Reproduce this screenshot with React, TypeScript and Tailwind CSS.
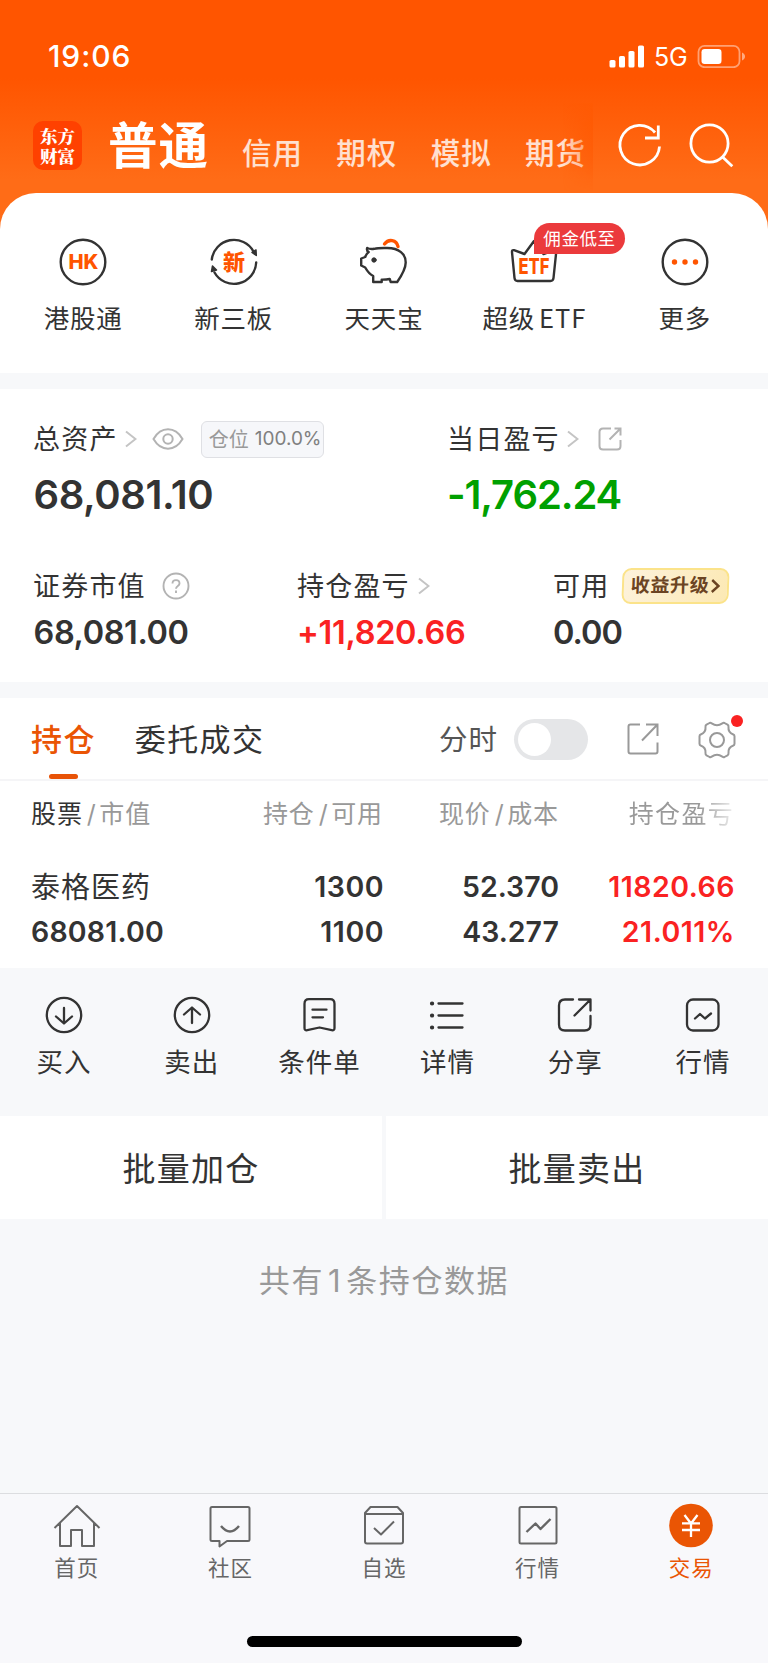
import React from "react";

type Kids = { children?: React.ReactNode };

const Chevron = ({ className = "" }: { className?: string }) => (
  <svg className={`h-[18px] w-[12px] shrink-0 ${className}`} viewBox="0 0 12 18" fill="none" stroke="#c4c4c4" strokeWidth="2">
    <path d="M1 1.5 10.5 9 1 16.5" />
  </svg>
);

const Slash = () => <span className="ml-[4px] mr-[2.500px]">/</span>;

const GridItem = ({ label, children }: Kids & { label: React.ReactNode }) => (
  <div className="flex flex-1 flex-col items-center">
    <svg className="h-12 w-12 overflow-visible" viewBox="0 0 48 48" fill="none" stroke="#333" strokeWidth="2.4" strokeLinejoin="round" strokeLinecap="round">
      {children}
    </svg>
    <div className="mt-[15px] whitespace-nowrap text-[25.5px] leading-9 tracking-[0.8px]">{label}</div>
  </div>
);

const Action = ({ label, children }: Kids & { label: string }) => (
  <div className="flex flex-1 flex-col items-center">
    <svg className="h-10 w-10" viewBox="0 0 40 40" fill="none" stroke="#333" strokeWidth="2.3" strokeLinejoin="round" strokeLinecap="round">
      {children}
    </svg>
    <div className="mt-[9px] text-[26.5px] leading-9 tracking-[1px]">{label}</div>
  </div>
);

const Tab = ({ label, active, children }: Kids & { label: string; active?: boolean }) => (
  <div className={`flex flex-1 flex-col items-center ${active ? "text-[#ea5504]" : "text-[#666]"}`}>
    <svg className="h-12 w-12" viewBox="0 0 48 48" fill="none" stroke="currentColor" strokeWidth="2" strokeLinejoin="round">
      {children}
    </svg>
    <div className="mt-[4px] text-[21.5px] leading-[30px] tracking-[1px]">{label}</div>
  </div>
);

export default function App() {
  return (
    <div className="flex h-[1663px] w-[768px] flex-col overflow-hidden bg-[#f7f8fa] font-['Inter','Noto_Sans_CJK_SC',sans-serif] text-[#333]">
      <header className="h-[240px] shrink-0 bg-[linear-gradient(180deg,#ff5500_0px,#ff5500_78px,#ff6c17_180px,#ff6c17_240px)] text-white">
        <div className="flex h-[112px] items-center pl-[48px]">
          <span className="text-[30px] font-medium leading-9 tracking-[0.9px]">19:06</span>
          <svg className="ml-auto h-6 w-[36px]" viewBox="0 0 36 24" fill="#fff">
            <rect x="0.5" y="16" width="6" height="7.5" rx="1.6" />
            <rect x="10" y="12" width="6" height="11.5" rx="1.6" />
            <rect x="19.5" y="7" width="6" height="16.5" rx="1.6" />
            <rect x="29" y="1.5" width="6" height="22" rx="1.6" />
          </svg>
          <span className="ml-[9px] mt-[2px] w-[42px] text-[25px] leading-8 -tracking-[0.3px]">5G</span>
          <svg className="mr-[21px] h-6 w-[51px]" viewBox="87 0 51 24" fill="#fff">
            <rect x="89.5" y="1.8" width="41" height="21.4" rx="6" fill="none" stroke="#fff" strokeOpacity=".45" strokeWidth="1.8" />
            <rect x="92.5" y="5" width="20" height="15" rx="3.2" />
            <path d="M133 8.500c4 1.500 4 6.500 0 8Z" fillOpacity=".5" />
          </svg>
        </div>
        <div className="flex h-[80px] pl-[33px]">
          <div className="mt-[9px] flex h-[49px] w-[49px] flex-col items-center justify-center gap-[2px] rounded-[10px] bg-[#ff4100] font-['Noto_Serif_CJK_SC','Noto_Sans_CJK_SC',serif] text-[17.5px] font-black leading-[18px]">
            <span>东方</span>
            <span>财富</span>
          </div>
          <div className="ml-[26px] mt-[4px] text-[49.5px] font-bold leading-[60px] tracking-[1px]">普通</div>
          <div className="relative -mt-[9px] ml-[33px] flex h-[89px] w-[351px] overflow-hidden pt-[30px] text-[29.5px] font-medium leading-10 tracking-[1px] text-white/80">
            <span className="mr-[33.300px] shrink-0">信用</span>
            <span className="mr-[33.300px] shrink-0">期权</span>
            <span className="mr-[33.300px] shrink-0">模拟</span>
            <span className="shrink-0">期货</span>
            <div className="absolute right-0 top-0 h-full w-[30px] bg-[linear-gradient(90deg,transparent,#ff5a04)] [mask-image:linear-gradient(180deg,#000,#0008_60%,transparent)]" />
          </div>
          <svg className="ml-[22px] mt-[7px] h-[52px] w-[125px]" viewBox="0 0 125 52" fill="none" stroke="#fff" strokeWidth="2.8">
            <path d="M44.500 27.500A19.800 19.800 0 1 1 40 13.500M43.300 6.500V19H30" />
            <circle cx="94.500" cy="24.500" r="18.600" />
            <path d="m107 37.500 10.300 9.800" />
          </svg>
        </div>
      </header>

      <section className="relative -mt-[47px] flex h-[180px] shrink-0 rounded-t-[36px] bg-white px-[8px] pt-[45px]">
        <GridItem label="港股通">
          <circle cx="24" cy="24" r="22.300" />
          <text x="24.500" y="31" textAnchor="middle" fontSize="20" fontWeight="800" fill="#ff5500" stroke="none" textLength="30" lengthAdjust="spacingAndGlyphs">HK</text>
        </GridItem>
        <GridItem label="新三板">
          <path d="M1.800 21.500A22.300 22.300 0 0 1 43.500 13.500M46.200 24.500A22.300 22.300 0 0 1 4.500 34.500" />
          <path d="m42 14.500 4-2.500.3 5.500ZM1.500 33.500l1-5.500 4 4Z" fill="#333" strokeWidth="1.500" />
          <text x="24" y="32" textAnchor="middle" fontSize="22" fontWeight="900" fill="#ff5500" stroke="none">新</text>
        </GridItem>
        <GridItem label="天天宝">
          <path transform="translate(-.8 0)" d="M8 10c2 1 4 1.300 7 .8 4-1 8-.8 13-.8 12 0 18.500 6 18.500 14.500 0 6-3 11.500-8.500 19.500h-6.500l-1-3c-4 .7-8 .6-8 .6V44h-8.500v-6c-4-2-6-5-8-8.500l-4-2v-7l4-1.500c.7-2 1.700-3.600 3.500-5C7.800 13 7.500 11.500 8 10Z" />
          <circle cx="14" cy="22" r="2.200" fill="#333" strokeWidth="1" />
          <path d="M24.500 6c4-5.500 12-4.500 13.500 2.500" stroke="#ff5500" strokeWidth="3.400" />
        </GridItem>
        <GridItem label={<>超级<span className="ml-[4px] font-['Noto_Sans_CJK_SC',sans-serif] leading-none tracking-[1px]">ETF</span></>}>
          <path d="M4 12.200 14.500 16 24 3l9.500 13L44 12.200q2.500-.6 2.200 2L43.500 40q-.3 3-3 3h-33q-2.700 0-3-3L2 14.200q-.2-2.600 2-2Z" />
          <text x="24" y="35.500" textAnchor="middle" fontSize="21" fontWeight="800" fill="#ff5500" stroke="none" textLength="31" lengthAdjust="spacingAndGlyphs">ETF</text>
        </GridItem>
        <GridItem label="更多">
          <circle cx="24" cy="24" r="22.300" />
          <g fill="#ff5500" stroke="none">
            <circle cx="13.500" cy="24" r="2.700" />
            <circle cx="24" cy="24" r="2.700" />
            <circle cx="34.500" cy="24" r="2.700" />
          </g>
        </GridItem>
        <div className="absolute left-[534px] top-[30px] flex h-[31px] w-[91px] items-center justify-center rounded-[16px] rounded-bl-none bg-[#eb3a3c] text-[17.5px] leading-none tracking-[0.6px] text-white">
          佣金低至
        </div>
      </section>

      <section className="mt-[16px] h-[293px] shrink-0 bg-white pl-[33px] pt-[30px]">
        <div className="flex">
          <div className="w-[414px]">
            <div className="flex h-10 items-center text-[27px] leading-10 tracking-[1.2px]">
              <span className="pt-px">总资产</span>
              <Chevron className="ml-[7px]" />
              <svg className="ml-[15px] h-[24px] w-[32px]" viewBox="0 0 32 24" fill="none" stroke="#b3b3b3" strokeWidth="2">
                <path d="M1.500 12C9-.9 23-.9 30.500 12 23 24.900 9 24.900 1.500 12Z" />
                <circle cx="16" cy="12" r="4.700" />
              </svg>
              <span className="ml-[17px] flex h-[37px] w-[123px] items-center justify-center gap-[6px] whitespace-nowrap rounded-[6px] border border-[#dfe0e4] bg-[#f6f7fa] pl-[6px] text-[#808080]">
                <span className="pt-px text-[20px] tracking-[0px] text-[#999]">仓位</span>
                <span className="text-[19px] tracking-[0px]">100.0%</span>
              </span>
            </div>
            <div className="mt-[12px] pl-[0.5px] text-[40px] font-semibold leading-[48px] -tracking-[0.4px]">68,081.10</div>
          </div>
          <div>
            <div className="flex h-10 items-center text-[27px] leading-10 tracking-[1.2px]">
              <span className="pt-px">当日盈亏</span>
              <Chevron className="ml-[7px]" />
              <svg className="ml-[18px] h-[26px] w-[26px]" viewBox="0 0 26 26" fill="none" stroke="#b3b3b3" strokeWidth="2">
                <path d="M14 2.500H6q-3.500 0-3.500 3.500v14q0 3.500 3.500 3.500h14q3.500 0 3.500-3.500v-6M17.500 2.500h6v7M23 3 12.500 13.500" />
              </svg>
            </div>
            <div className="mt-[12px] text-[40px] font-semibold leading-[48px] -tracking-[1.1px] text-[#00a000]">-1,762.24</div>
          </div>
        </div>
        <div className="mt-[47px] flex">
          <div className="w-[264px]">
            <div className="flex h-10 items-center text-[27px] leading-10 tracking-[1.2px]">
              <span className="pt-px">证券市值</span>
              <svg className="ml-[16px] h-[28px] w-[28px]" viewBox="0 0 28 28" fill="none" stroke="#b3b3b3" strokeWidth="1.900">
                <circle cx="14" cy="14" r="12.500" />
                <path d="M10.500 11.500c0-4.500 7-4.500 7 0 0 2.500-3.500 2.500-3.500 5.300M14 18.500v2.400" />
              </svg>
            </div>
            <div className="mt-[7px] pl-[0.5px] text-[32.5px] font-semibold leading-10 -tracking-[0.4px]">68,081.00</div>
          </div>
          <div className="w-[256px]">
            <div className="flex h-10 items-center text-[27px] leading-10 tracking-[1.2px]">
              <span className="pt-px">持仓盈亏</span>
              <Chevron className="ml-[8px]" />
            </div>
            <div className="mt-[7px] text-[32.5px] font-semibold leading-10 -tracking-[0.3px] text-[#fa2222]">+11,820.66</div>
          </div>
          <div>
            <div className="flex h-10 items-center text-[27px] leading-10 tracking-[1.2px]">
              <span className="pt-px">可用</span>
              <span className="ml-[13px] flex h-[36px] w-[107px] -skew-x-2 items-center justify-center gap-[2px] whitespace-nowrap rounded-[9px] border-2 border-[#fbe38a] bg-[linear-gradient(110deg,#fdf2dc,#fce9b4)] text-[19px] font-bold tracking-[0.6px] text-[#6b4423]">
                收益升级
                <svg className="h-4 w-[9px]" viewBox="0 0 9 16" fill="none" stroke="#6b4423" strokeWidth="2.400">
                  <path d="m1 2 6.500 6L1 14" />
                </svg>
              </span>
            </div>
            <div className="mt-[7px] text-[32.5px] font-semibold leading-10 -tracking-[1px]">0.00</div>
          </div>
        </div>
      </section>

      <section className="mt-[16px] h-[270px] shrink-0 bg-white">
        <div className="flex h-[83px] items-center border-b-2 border-[#f5f5f7] pl-[31px] pr-[31px]">
          <div className="flex h-full flex-col items-center text-[31px] font-medium tracking-[1.400px] text-[#ea5504]">
            <span className="mt-[22px] leading-10">持仓</span>
            <span className="mt-[14px] h-[6px] w-[29px] rounded-[2.500px] bg-[#e85307]" />
          </div>
          <span className="ml-[39px] pt-[3px] text-[31px] tracking-[1.400px]">委托成交</span>
          <span className="ml-auto mr-[16px] pt-[3px] text-[28.5px] tracking-[1px] text-[#555]">分时</span>
          <div className="mt-[2px] flex h-[41px] w-[74px] items-center rounded-full bg-[#e5e6e8] pl-[4px]">
            <span className="h-[33px] w-[33px] rounded-full bg-white" />
          </div>
          <svg className="ml-[38px] mt-px h-[34px] w-[34px]" viewBox="0 0 34 34" fill="none" stroke="#999" strokeWidth="2">
            <path d="M14 2.500H4.500q-2 0-2 2v25q0 2 2 2h25q2 0 2-2v-9M20 2.500h11.500V14M31 3 16 18.500" />
          </svg>
          <div className="relative ml-[37px] mt-[2px] h-[40px] w-[40px]">
            <svg className="h-[40px] w-[40px]" viewBox="0 0 40 40" fill="none" stroke="#999" strokeWidth="2" strokeLinejoin="round">
              <path d="M12.500 3q1.200-.5 2.200.4 5.300 3.800 10.600 0 1-.9 2.200-.4l3 1.700q1.200.8 1 2.200-.6 5.600 4.800 7.600 1.200.5 1.200 1.800v7.400q0 1.300-1.200 1.800-5.400 2-4.800 7.600.2 1.400-1 2.200l-3 1.700q-1.200.5-2.200-.4-5.300-3.800-10.600 0-1 .9-2.200.4l-3-1.700q-1.200-.8-1-2.200.6-5.600-4.800-7.600-1.200-.5-1.200-1.800v-7.400q0-1.300 1.200-1.800 5.400-2 4.800-7.600-.2-1.400 1-2.200Z" />
              <circle cx="20" cy="20" r="7" />
            </svg>
            <span className="absolute -top-[5px] left-[34px] h-[12px] w-[12px] rounded-full bg-[#fa2222]" />
          </div>
        </div>
        <div className="grid h-[66px] grid-cols-[199px_153px_176px_175px] items-center pl-[31px] pt-[2px] text-[25px] tracking-[0.9px] text-[#999]">
          <span><span className="text-[#333]">股票</span><Slash />市值</span>
          <span className="text-right">持仓<Slash />可用</span>
          <span className="text-right">现价<Slash />成本</span>
          <span className="bg-[linear-gradient(90deg,#999_80%,#eee)] bg-clip-text text-right tracking-[1.300px] text-transparent">持仓盈亏</span>
        </div>
        <div className="mt-[20px] grid grid-cols-[199px_154px_175px_176px] pl-[31px] text-[28.500px] font-semibold leading-10 tracking-[0.5px]">
          <span className="pt-px text-[29px] font-normal leading-[39px] tracking-[1px]">泰格医药</span>
          <span className="text-right">1300</span>
          <span className="text-right tracking-[0px]">52.370</span>
          <span className="text-right text-[#fa2222]">11820.66</span>
        </div>
        <div className="mt-[5px] grid grid-cols-[199px_154px_175px_176px] pl-[31px] text-[28.500px] font-semibold leading-10 tracking-[0.5px]">
          <span className="tracking-[0.2px]">68081.00</span>
          <span className="text-right">1100</span>
          <span className="text-right tracking-[0px]">43.277</span>
          <span className="text-right text-[#fa2222]">21.011%</span>
        </div>
      </section>

      <section className="flex h-[148px] shrink-0 pr-px pt-[27px]">
        <Action label="买入">
          <circle cx="20" cy="20" r="17.200" />
          <path d="M20 13v15M12 21.500l8 7 8-7" />
        </Action>
        <Action label="卖出">
          <circle cx="20" cy="20" r="17.200" />
          <path d="M20 28V13M12 19.500l8-7 8 7" />
        </Action>
        <Action label="条件单">
          <path d="M9 4.200h21q4.500 0 4.500 4.500V33q0 2.800-2.800 2.200L19.500 32.500 7.300 35.200Q4.500 35.800 4.500 33V8.700q0-4.500 4.500-4.500ZM12.500 14.700h14M12.500 22.300H23" />
        </Action>
        <Action label="详情">
          <path d="M11.500 8.500h24M11.500 20.500h24M11.500 32.500h24" />
          <path d="M5 8.500h.1M5 20.500h.1M5 32.500h.1" strokeWidth="4.200" />
        </Action>
        <Action label="分享">
          <path d="M18 4.500H10q-6 0-6 6v19q0 6 6 6h19.500q6 0 6-6v-8.500M24 4.500h11.500v11M35 5 19.500 20.500" />
        </Action>
        <Action label="行情">
          <rect x="4" y="4.500" width="31.500" height="31" rx="6" />
          <path d="m12 23.500 5-4.500 5 4.500 6-5" />
        </Action>
      </section>

      <section className="flex h-[103px] shrink-0 gap-[4px] text-[33px] tracking-[1.300px]">
        <div className="flex flex-1 items-center justify-center bg-white pt-[4px]">批量加仓</div>
        <div className="flex flex-1 items-center justify-center bg-white pt-[4px]">批量卖出</div>
      </section>

      <div className="mt-[42px] text-center text-[31px] leading-10 tracking-[1.600px] text-[#999]">共有<span className="mx-[4px]">1</span>条持仓数据</div>

      <nav className="mt-auto h-[170px] shrink-0 border-t border-[#dcdde0] bg-[#f8f8fb]">
        <div className="flex pt-[7px]">
          <Tab label="首页">
            <path d="M1.500 27 24 5l22.500 22M7 22v23h11V29h11v16h12V22" />
          </Tab>
          <Tab label="社区">
            <path d="M6 6h36q1.500 0 1.500 1.500v31Q43.500 40 42 40H21l-7.500 5.500V40H6q-1.500 0-1.500-1.500v-31Q4.500 6 6 6Z" />
            <path d="M15 25q9 11 18 0" strokeWidth="2.400" />
          </Tab>
          <Tab label="自选">
            <path d="M10.500 6h27L43 12v28.500q0 2-2 2H7q-2 0-2-2V12ZM5 13h38M14 27l7 6.500 13-13" />
          </Tab>
          <Tab label="行情">
            <rect x="5.500" y="6" width="37" height="36.500" rx="1.500" />
            <path d="m12.500 31 9-8.500 5 5.500 10-10" strokeWidth="2.400" />
          </Tab>
          <Tab label="交易" active>
            <circle cx="24" cy="24.500" r="21.800" fill="#ea5504" stroke="none" />
            <path d="m17.500 14 6.500 8.500 6.500-8.500M24 22v14M15 22.300h18M15 29h18" stroke="#fff" strokeWidth="2.300" />
          </Tab>
        </div>
        <div className="mx-auto mt-[53px] h-[10.500px] w-[275px] rounded-full bg-black" />
      </nav>
    </div>
  );
}
